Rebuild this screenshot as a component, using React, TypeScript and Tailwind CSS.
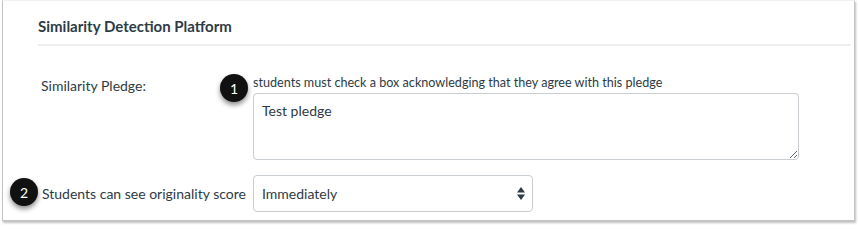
import { useState } from "react";

function Badge({ n, className }: { n: number; className: string }) {
  return (
    <span
      className={`absolute flex items-center justify-center w-[28px] h-[28px] rounded-full bg-[#111] text-white text-[14px] shadow-[0_3px_5px_rgba(0,0,0,0.45)] ${className}`}
    >
      {n}
    </span>
  );
}

export default function App() {
  const [pledge, setPledge] = useState("Test pledge");
  const [when, setWhen] = useState("Immediately");

  return (
    <div className="w-[858px] h-[233px] bg-white font-['Lato','Liberation_Sans',sans-serif] text-[#2d3b45]">
      <div className="relative ml-[2px] w-[853px] h-[221px] border-l border-r border-b border-t border-t-[#f2f2f2] border-[#c4c4c4] shadow-[1px_2px_2px_rgba(0,0,0,0.25)] pl-[35px] pr-[3px] pt-[15px]">
        <div className="pb-[8px] border-b-2 border-[#eeeeee]">
          <h2 className="text-[15px] leading-[20px] font-bold">Similarity Detection Platform</h2>
        </div>

        <div className="grid grid-cols-[215px_546px] mt-[30px] gap-y-[15px]">
          <div className="pl-[3px] text-[14px] leading-[20px]">Similarity Pledge:</div>
          <div>
            <p className="text-[12.6px] leading-[14px]">
              students must check a box acknowledging that they agree with this pledge
            </p>
            <textarea
              value={pledge}
              onChange={(e) => setPledge(e.target.value)}
              className="block mt-[3px] w-[546px] h-[67px] border border-[#c7cdd1] rounded-[4px] px-[8px] py-[7px] text-[14px] leading-[20px] outline-none"
            />
          </div>

          <div className="flex items-center pl-[4px] text-[14px] leading-[20px] whitespace-nowrap">
            Students can see originality score
          </div>
          <div className="relative w-[280px]">
            <select
              value={when}
              onChange={(e) => setWhen(e.target.value)}
              className="appearance-none block w-[280px] h-[37px] border border-[#c7cdd1] rounded-[4px] pl-[8px] text-[14px] bg-white outline-none"
            >
              <option>Immediately</option>
              <option>After the assignment is graded</option>
              <option>After the due date</option>
              <option>Never</option>
            </select>
            <svg
              className="absolute right-[8px] top-[12px] pointer-events-none"
              width="8"
              height="13"
              viewBox="0 0 8 13"
            >
              <path d="M4 0 L8 5.5 H0 Z" fill="#2d3b45" />
              <path d="M0 7.5 H8 L4 13 Z" fill="#2d3b45" />
            </svg>
          </div>
        </div>

        <Badge n={1} className="left-[217px] top-[73px]" />
        <Badge n={2} className="left-[7px] top-[177px]" />
      </div>
    </div>
  );
}
